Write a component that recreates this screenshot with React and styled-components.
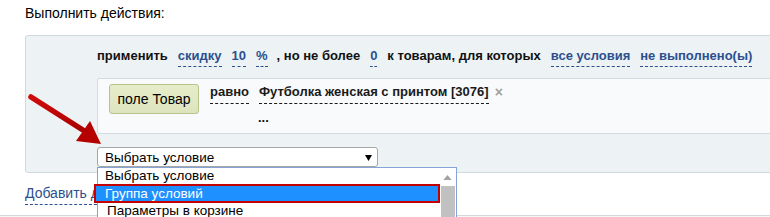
import React from 'react';
import styled, { createGlobalStyle } from 'styled-components';

const GlobalStyle = createGlobalStyle`
  html, body {
    margin: 0;
    padding: 0;
    background: #fff;
  }
  body {
    font-family: "Liberation Sans", Arial, sans-serif;
    font-size: 13px;
    color: #000;
  }
`;

const App = () => {
  return (
    <Page>
      <GlobalStyle />
      <Section>
        <Title>Выполнить действия:</Title>
        <Panel>
          <ActionRow>
            <span>применить</span>
            <Link>скидку</Link>
            <Link>10</Link>
            <Link>%</Link>
            <Comma>, но не более</Comma>
            <Link>0</Link>
            <span>к товарам, для которых</span>
            <Link>все условия</Link>
            <Link>не выполнено(ы)</Link>
          </ActionRow>
          <CondBox>
            <FieldButton>поле Товар</FieldButton>
            <CondText>
              <CondLine>
                <Link $dark>равно</Link>
                <Link $dark>Футболка женская с принтом [3076]</Link>
                <Remove>×</Remove>
              </CondLine>
              <More>...</More>
            </CondText>
          </CondBox>
          <SelectWrap>
            <FakeSelect>
              <span>Выбрать условие</span>
              <Caret viewBox="0 0 8 8">
                <path d="M0 1 L8 1 L4 8 Z" fill="#000" />
              </Caret>
            </FakeSelect>
            <DropList>
              <Options>
                <Option>Выбрать условие</Option>
                <Option $selected>Группа условий</Option>
                <Option $offset>Параметры в корзине</Option>
              </Options>
              <ScrollBar>
                <ScrollArrow viewBox="0 0 10 6">
                  <path d="M0 6 L5 0 L10 6 Z" fill="#a3a3a3" />
                </ScrollArrow>
                <Thumb />
              </ScrollBar>
            </DropList>
          </SelectWrap>
        </Panel>
        <AddLink>Добавить действие</AddLink>
      </Section>
      <Footer />
      <Pointer viewBox="0 0 770 217" width="770" height="217">
        <defs>
          <linearGradient id="arrowRed" x1="0" y1="0" x2="1" y2="1">
            <stop offset="0" stopColor="#d10a0a" />
            <stop offset="1" stopColor="#a80000" />
          </linearGradient>
        </defs>
        <line x1="31" y1="97" x2="86" y2="132" stroke="url(#arrowRed)" strokeWidth="5.5" strokeLinecap="round" />
        <polygon points="101,144 76,141 90,121" fill="#b60000" />
      </Pointer>
    </Page>
  );
};

export default App;

const Page = styled.div`
  position: relative;
  width: 770px;
  height: 217px;
  overflow: hidden;
`;

const Section = styled.div`
  padding: 5px 0 10px 25px;
`;

const Title = styled.div`
  font-size: 14px;
  line-height: 16px;
  color: #000;
`;

const Panel = styled.div`
  margin-top: 14px;
  width: 800px;
  background: #edf3f5;
  border: 1px solid #d3dadd;
  border-radius: 3px;
  padding: 12px 0 5px 71px;
`;

const ActionRow = styled.div`
  display: flex;
  align-items: flex-start;
  gap: 10px;
  font-weight: bold;
  line-height: 16px;
  height: 19px;
  margin-bottom: 11px;
  color: #111;
`;

const Link = styled.span`
  color: ${(p) => (p.$dark ? '#1a1a1a' : '#2c4f8e')};
  border-bottom: 1px dashed ${(p) => (p.$dark ? '#1a1a1a' : '#2c4f8e')};
  padding-bottom: 2px;
  cursor: pointer;
`;

const Comma = styled.span`
  margin-left: -1px;
`;

const CondBox = styled.div`
  display: flex;
  align-items: flex-start;
  height: 44px;
  background: #f9fafb;
  border: 1px solid #d5dbe0;
  border-radius: 2px;
  padding: 5px 11px;
`;

const FieldButton = styled.button`
  width: 90px;
  height: 30px;
  padding: 0;
  font-family: inherit;
  font-size: 14px;
  color: #000;
  background: linear-gradient(#e7ecca, #dde4bd);
  border: 1px solid #b7c28c;
  border-radius: 3px;
`;

const CondText = styled.div`
  margin-left: 11px;
  font-weight: bold;
  line-height: 16px;
  color: #111;
`;

const CondLine = styled.div`
  display: flex;
  align-items: flex-start;
  gap: 10px;

  ${Link} {
    padding-bottom: 3px;
  }
`;

const Remove = styled.span`
  margin-left: -4px;
  color: #a0a0a0;
  font-size: 14px;
`;

const More = styled.div`
  margin-top: 6px;
  padding-left: 48px;
`;

const SelectWrap = styled.div`
  position: relative;
  margin-top: 13px;
  width: 281px;
`;

const FakeSelect = styled.div`
  display: flex;
  align-items: center;
  justify-content: space-between;
  box-sizing: border-box;
  height: 20px;
  padding: 0 5px 0 7px;
  background: #fff;
  border: 1px solid #a6a6a6;
  border-radius: 3px;
  font-size: 13.5px;
  color: #000;
`;

const Caret = styled.svg`
  width: 7px;
  height: 7px;
`;

const DropList = styled.div`
  position: absolute;
  top: 20px;
  left: 0;
  width: 360px;
  height: 70px;
  box-sizing: border-box;
  display: flex;
  background: #fff;
  border: 1px solid #85a3d6;
  border-bottom: none;
  z-index: 2;
`;

const Options = styled.div`
  flex: 1;
  font-size: 13.5px;
  line-height: 16px;
  color: #000;
`;

const Option = styled.div`
  padding-left: ${(p) => (p.$offset ? '9px' : '7px')};
  ${(p) =>
    p.$selected &&
    `
    margin-left: -4px;
    padding-left: 9px;
    background: #1e90ff;
    color: #fff;
    border: 2px solid #c40000;
    line-height: 15px;
  `}
`;

const ScrollBar = styled.div`
  width: 15px;
  display: flex;
  flex-direction: column;
  align-items: center;
  padding-right: 1px;
`;

const ScrollArrow = styled.svg`
  width: 9px;
  height: 5px;
  margin: 7px 0 6px;
`;

const Thumb = styled.div`
  width: 14px;
  flex: 1;
  background: #c1c1c1;
`;

const AddLink = styled.span`
  display: inline-block;
  margin-top: 12px;
  font-size: 14px;
  line-height: 16px;
  color: #2c4f8e;
  border-bottom: 1px dashed #2c4f8e;
  padding-bottom: 3px;
`;

const Footer = styled.div`
  height: 20px;
  background: #f4f7f8;
  border-top: 1px solid #d3d8dc;
`;

const Pointer = styled.svg`
  position: absolute;
  left: 0;
  top: 0;
  pointer-events: none;
  z-index: 3;
`;
